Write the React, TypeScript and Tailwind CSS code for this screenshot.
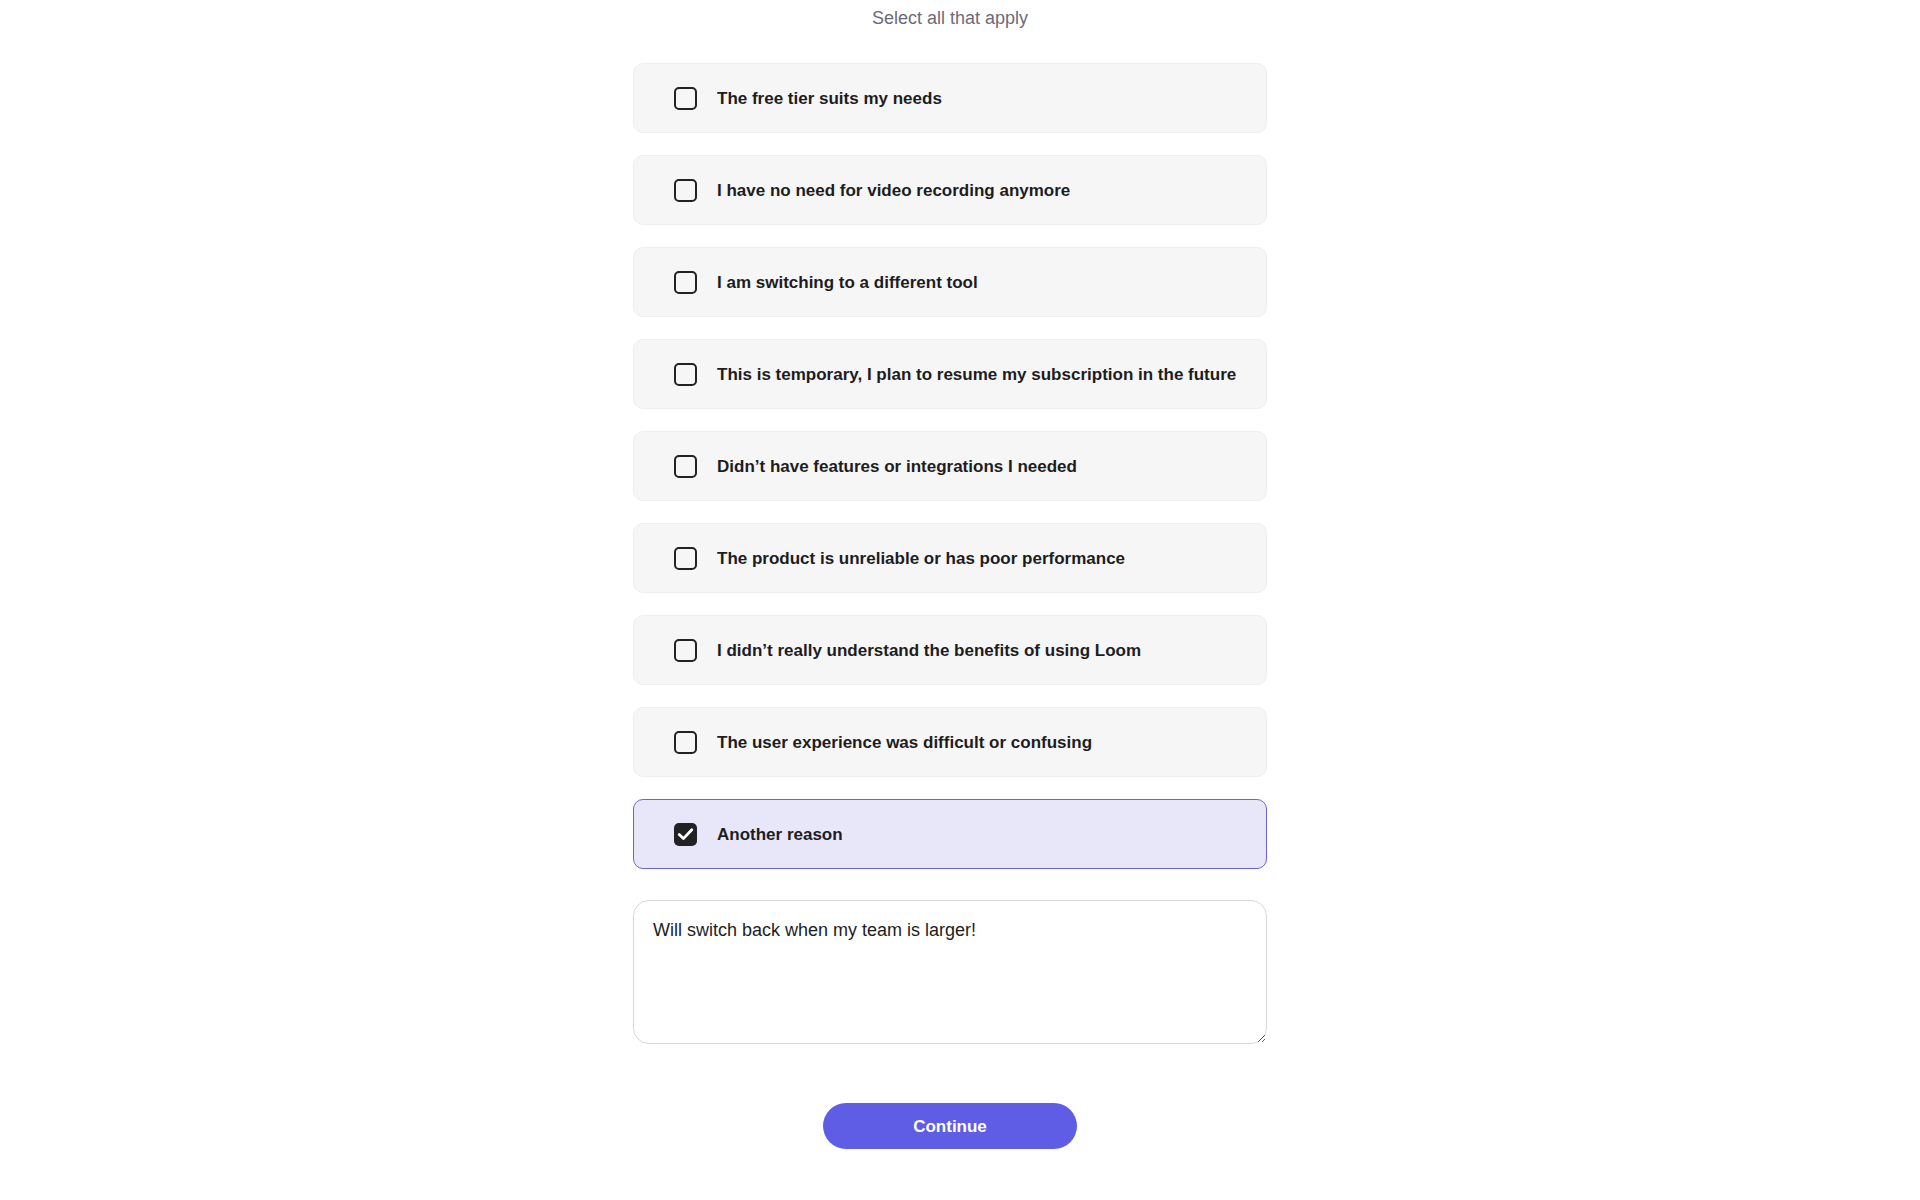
import React, { useState } from "react";

const reasons = [
  "The free tier suits my needs",
  "I have no need for video recording anymore",
  "I am switching to a different tool",
  "This is temporary, I plan to resume my subscription in the future",
  "Didn\u2019t have features or integrations I needed",
  "The product is unreliable or has poor performance",
  "I didn\u2019t really understand the benefits of using Loom",
  "The user experience was difficult or confusing",
  "Another reason",
];

function CheckBox({ checked }: { checked: boolean }) {
  if (checked) {
    return (
      <span className="flex h-[23px] w-[23px] shrink-0 items-center justify-center rounded-[5px] bg-[#222222]">
        <svg width="23" height="23" viewBox="0 0 23 23" fill="none">
          <path d="M5.2 11.6 L9.4 15.6 L17.8 6.8" stroke="#ffffff" strokeWidth="2.8" strokeLinecap="round" strokeLinejoin="round" />
        </svg>
      </span>
    );
  }
  return <span className="block h-[23px] w-[23px] shrink-0 rounded-[5px] border-[2.5px] border-[#222222] bg-transparent" />;
}

export default function App() {
  const [selected, setSelected] = useState<Set<number>>(new Set([8]));
  const [text, setText] = useState("Will switch back when my team is larger!");

  const toggle = (i: number) => {
    const next = new Set(selected);
    if (next.has(i)) next.delete(i);
    else next.add(i);
    setSelected(next);
  };

  return (
    <div className="min-h-[1200px] w-full bg-white font-['Liberation_Sans',Arial,sans-serif]">
      <div className="flex justify-center pr-[20px] pt-[4px]">
        <div className="flex w-[634px] flex-col">
          <p className="mb-[31px] text-center text-[18px] leading-[28px] text-[#6b6a7b]">Select all that apply</p>
          <div className="flex flex-col gap-[22px]">
            {reasons.map((r, i) => {
              const isOn = selected.has(i);
              return (
                <button
                  key={r}
                  type="button"
                  onClick={() => toggle(i)}
                  className={
                    isOn
                      ? "flex h-[70px] w-full items-center gap-[20px] rounded-[10px] border border-[#6866d2] bg-[#e8e7fa] pl-[40px] text-left"
                      : "flex h-[70px] w-full items-center gap-[20px] rounded-[10px] border border-[#eeeeee] bg-[#f6f6f6] pl-[40px] text-left"
                  }
                >
                  <CheckBox checked={isOn} />
                  <span className="pt-[2px] text-[17px] font-bold leading-[24px] text-[#1d1d1f]">{r}</span>
                </button>
              );
            })}
          </div>
          <textarea
            value={text}
            onChange={(e) => setText(e.target.value)}
            className="mt-[31px] h-[144px] w-full rounded-[16px] border border-[#d8d8d8] bg-white px-[19px] pt-[16px] text-[18px] leading-[27px] text-[#1d1d1f] outline-none"
          />
          <div className="mt-[59px] flex justify-center">
            <button
              type="button"
              className="h-[46px] w-[254px] rounded-full bg-[#5f5ce6] pt-[1px] text-[17px] font-bold text-white"
            >
              Continue
            </button>
          </div>
        </div>
      </div>
    </div>
  );
}
